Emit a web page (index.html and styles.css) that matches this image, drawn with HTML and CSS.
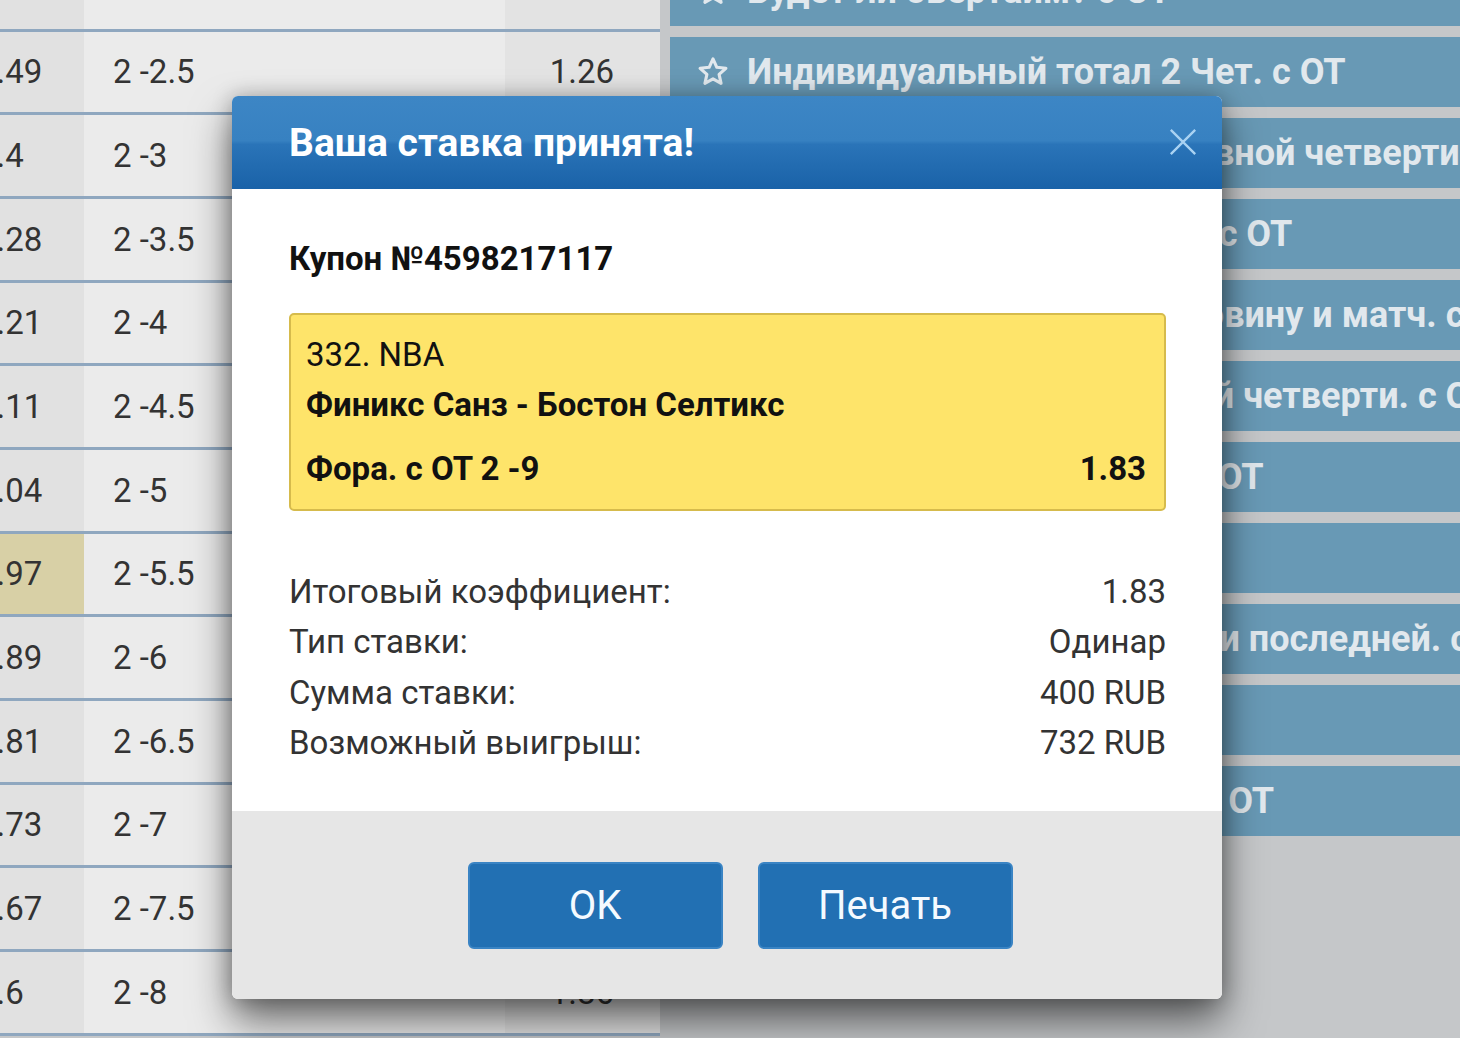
FILE: index.html
```html
<!DOCTYPE html>
<html lang="ru">
<head>
    <meta charset="UTF-8">
    <meta name="viewport" content="width=device-width, initial-scale=1.0">
    <title>Ваша ставка принята</title>
    <link rel="stylesheet" href="styles.css">
</head>
<body>
    <div class="screen">
        <div class="odds">
            <div class="odds-row"><span class="c1"></span><span class="c2"></span><span class="c3"></span></div>
            <div class="odds-row"><span class="c1">2.49</span><span class="c2">2 -2.5</span><span class="c3">1.26</span></div>
            <div class="odds-row"><span class="c1">2.4</span><span class="c2">2 -3</span><span class="c3">1.3</span></div>
            <div class="odds-row"><span class="c1">2.28</span><span class="c2">2 -3.5</span><span class="c3">1.35</span></div>
            <div class="odds-row"><span class="c1">2.21</span><span class="c2">2 -4</span><span class="c3">1.39</span></div>
            <div class="odds-row"><span class="c1">2.11</span><span class="c2">2 -4.5</span><span class="c3">1.44</span></div>
            <div class="odds-row"><span class="c1">2.04</span><span class="c2">2 -5</span><span class="c3">1.49</span></div>
            <div class="odds-row"><span class="c1 picked">1.97</span><span class="c2">2 -5.5</span><span class="c3">1.54</span></div>
            <div class="odds-row"><span class="c1">1.89</span><span class="c2">2 -6</span><span class="c3">1.6</span></div>
            <div class="odds-row"><span class="c1">1.81</span><span class="c2">2 -6.5</span><span class="c3">1.66</span></div>
            <div class="odds-row"><span class="c1">1.73</span><span class="c2">2 -7</span><span class="c3">1.72</span></div>
            <div class="odds-row"><span class="c1">1.67</span><span class="c2">2 -7.5</span><span class="c3">1.78</span></div>
            <div class="odds-row"><span class="c1">1.6</span><span class="c2">2 -8</span><span class="c3">1.86</span></div>
        </div>

        <div class="markets">
            <div class="market"><svg class="star" viewBox="0 0 24 24"><path d="M12 2.8l2.7 5.9 6.4.7-4.8 4.3 1.4 6.3L12 16.8 6.3 20l1.4-6.3-4.8-4.3 6.4-.7z"/></svg>Будет ли овертайм? с ОТ</div>
            <div class="market"><svg class="star" viewBox="0 0 24 24"><path d="M12 2.8l2.7 5.9 6.4.7-4.8 4.3 1.4 6.3L12 16.8 6.3 20l1.4-6.3-4.8-4.3 6.4-.7z"/></svg>Индивидуальный тотал 2 Чет. с ОТ</div>
            <div class="market"><svg class="star" viewBox="0 0 24 24"><path d="M12 2.8l2.7 5.9 6.4.7-4.8 4.3 1.4 6.3L12 16.8 6.3 20l1.4-6.3-4.8-4.3 6.4-.7z"/></svg>Тотал очков в каждой основной четверти. с ОТ</div>
            <div class="market"><svg class="star" viewBox="0 0 24 24"><path d="M12 2.8l2.7 5.9 6.4.7-4.8 4.3 1.4 6.3L12 16.8 6.3 20l1.4-6.3-4.8-4.3 6.4-.7z"/></svg>Победитель и тотал матча. с ОТ</div>
            <div class="market"><svg class="star" viewBox="0 0 24 24"><path d="M12 2.8l2.7 5.9 6.4.7-4.8 4.3 1.4 6.3L12 16.8 6.3 20l1.4-6.3-4.8-4.3 6.4-.7z"/></svg>Результаты на первую половину и матч. с ОТ</div>
            <div class="market"><svg class="star" viewBox="0 0 24 24"><path d="M12 2.8l2.7 5.9 6.4.7-4.8 4.3 1.4 6.3L12 16.8 6.3 20l1.4-6.3-4.8-4.3 6.4-.7z"/></svg>Исходы и тотал в последней четверти. с ОТ</div>
            <div class="market"><svg class="star" viewBox="0 0 24 24"><path d="M12 2.8l2.7 5.9 6.4.7-4.8 4.3 1.4 6.3L12 16.8 6.3 20l1.4-6.3-4.8-4.3 6.4-.7z"/></svg>Индивидуальный тотал 2 с ОТ</div>
            <div class="market"><svg class="star" viewBox="0 0 24 24"><path d="M12 2.8l2.7 5.9 6.4.7-4.8 4.3 1.4 6.3L12 16.8 6.3 20l1.4-6.3-4.8-4.3 6.4-.7z"/></svg>Фора с ОТ</div>
            <div class="market"><svg class="star" viewBox="0 0 24 24"><path d="M12 2.8l2.7 5.9 6.4.7-4.8 4.3 1.4 6.3L12 16.8 6.3 20l1.4-6.3-4.8-4.3 6.4-.7z"/></svg>Победитель в 1-й четверти и последней. с ОТ</div>
            <div class="market"><svg class="star" viewBox="0 0 24 24"><path d="M12 2.8l2.7 5.9 6.4.7-4.8 4.3 1.4 6.3L12 16.8 6.3 20l1.4-6.3-4.8-4.3 6.4-.7z"/></svg>Тотал матча</div>
            <div class="market"><svg class="star" viewBox="0 0 24 24"><path d="M12 2.8l2.7 5.9 6.4.7-4.8 4.3 1.4 6.3L12 16.8 6.3 20l1.4-6.3-4.8-4.3 6.4-.7z"/></svg>Индивидуальный тотал 1. с ОТ</div>
        </div>
    </div>

    <div class="modal">
        <div class="modal-head">
            <h2>Ваша ставка принята!</h2>
            <svg class="close" viewBox="0 0 32 32"><path d="M3 3l26 26M29 3L3 29"/></svg>
        </div>
        <div class="modal-body">
            <p class="coupon">Купон №4598217117</p>
            <div class="ticket">
                <p class="league">332. NBA</p>
                <p class="match">Финикс Санз - Бостон Селтикс</p>
                <div class="bet">
                    <span>Фора. с ОТ 2 -9</span>
                    <span>1.83</span>
                </div>
            </div>
            <div class="summary">
                <div class="line"><span>Итоговый коэффициент:</span><span>1.83</span></div>
                <div class="line"><span>Тип ставки:</span><span>Одинар</span></div>
                <div class="line"><span>Сумма ставки:</span><span>400 RUB</span></div>
                <div class="line"><span>Возможный выигрыш:</span><span>732 RUB</span></div>
            </div>
        </div>
        <div class="modal-foot">
            <div class="btn">OK</div>
            <div class="btn">Печать</div>
        </div>
    </div>
</body>
</html>
```

FILE: styles.css
```css
body {
    margin: 0;
    height: 100vh;
    overflow: hidden;
    background-color: #c5c7c9;
    font-family: Roboto, "Noto Sans", sans-serif;
}
.screen {
    display: flex;
    align-items: flex-start;
}

/* odds table (dimmed by overlay) */
.odds {
    width: 700px;
    flex-shrink: 0;
    margin-left: -40px;
    margin-top: -52px;
}
.odds-row {
    display: grid;
    grid-template-columns: 124px 421px 155px;
    height: 83.67px;
    box-sizing: border-box;
    border-bottom: 3px solid #8fa7bf;
    font-size: 33px;
    color: #333;
}
.odds-row span {
    display: flex;
    align-items: center;
}
.c1 {
    background-color: #e1e1e1;
    padding-left: 18px;
}
.c1.picked {
    background-color: #d8d0a6;
}
.c2 {
    background-color: #ebebeb;
    padding-left: 29px;
}
.c3 {
    background-color: #e3e3e3;
    justify-content: flex-end;
    padding-right: 46px;
}

.markets {
    flex-grow: 1;
    min-width: 0;
    margin-left: 10px;
    margin-top: -44px;
    display: flex;
    flex-direction: column;
    gap: 11px;
}
.market {
    height: 70px;
    background-color: #6899b5;
    color: #e1e8ed;
    font-size: 36px;
    font-weight: bold;
    display: flex;
    align-items: center;
    padding-left: 26px;
    white-space: nowrap;
    overflow: hidden;
}
.star {
    width: 34px;
    height: 34px;
    flex-shrink: 0;
    margin-right: 17px;
    fill: none;
    stroke: #e1e8ed;
    stroke-width: 2.2;
    stroke-linejoin: round;
}

/* modal */
.modal {
    position: absolute;
    left: 232px;
    top: 96px;
    width: 990px;
    background-color: #fff;
    border-radius: 6px;
    overflow: hidden;
    box-shadow: 0 22px 40px rgba(0, 0, 0, 0.55), 0 0 20px rgba(0, 0, 0, 0.25);
}
.modal-head {
    height: 93px;
    background: linear-gradient(to bottom, #3d86c5 0%, #3781c1 48%, #2a74b8 52%, #1a62a8 100%);
    display: flex;
    align-items: center;
    justify-content: space-between;
    padding: 0 24px 0 57px;
}
.modal-head h2 {
    margin: 0;
    color: #fff;
    font-size: 39px;
    font-weight: bold;
}
.close {
    width: 30px;
    height: 30px;
    margin-bottom: 2px;
    fill: none;
    stroke: #a9d2f2;
    stroke-width: 2.5;
}
.modal-body {
    padding: 52px 56px 43px 57px;
}
.modal-body p {
    margin: 0;
}
.coupon {
    font-size: 33px;
    font-weight: bold;
    color: #111;
    line-height: 36px;
}
.ticket {
    margin-top: 36px;
    background-color: #fee46a;
    border: 2px solid #d6bb4c;
    border-radius: 5px;
    padding: 20px 18px 10px 15px;
    color: #111;
    font-size: 33px;
}
.league {
    line-height: 40px;
}
.match {
    font-weight: bold;
    line-height: 60px;
}
.bet {
    display: flex;
    justify-content: space-between;
    font-weight: bold;
    line-height: 60px;
    margin-top: 4px;
}
.summary {
    margin-top: 56px;
    font-size: 33px;
    color: #333;
}
.summary .line {
    display: flex;
    justify-content: space-between;
    line-height: 50.3px;
}
.modal-foot {
    background-color: #e6e6e6;
    height: 188px;
    display: flex;
    justify-content: center;
    align-items: center;
    gap: 35px;
    padding-left: 26px;
}
.btn {
    width: 255px;
    height: 87px;
    box-sizing: border-box;
    background-color: #2270b3;
    border: 2px solid #3a84c4;
    border-radius: 6px;
    color: #f4faff;
    font-size: 40px;
    display: flex;
    justify-content: center;
    align-items: center;
    cursor: pointer;
}
```
